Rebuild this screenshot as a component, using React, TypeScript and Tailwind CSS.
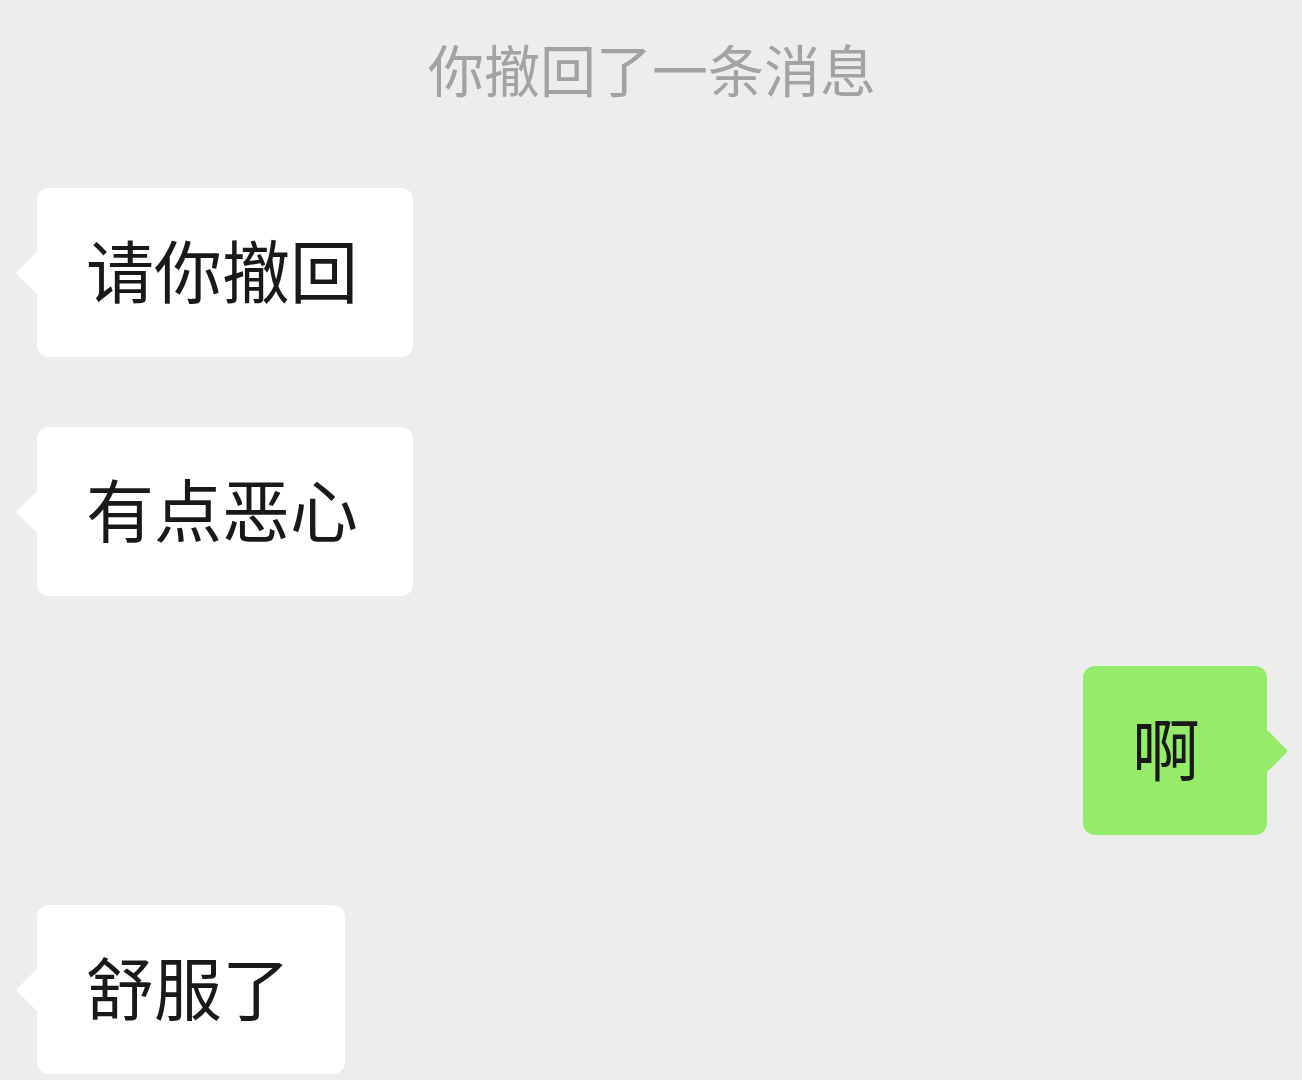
const font = { fontFamily: '"Noto Sans CJK SC", "Noto Sans", sans-serif' };

function Bubble({ text, mine }: { text: string; mine?: boolean }) {
  return (
    <div className={`flex ${mine ? "justify-end" : "justify-start"}`}>
      <div
        className={`relative rounded-[12px] pb-[54px] pl-[49px] pr-[55px] pt-[46px] text-[68px] leading-[69px] text-[#191919] ${
          mine ? "min-w-[184px] bg-[#95ec69]" : "bg-white"
        }`}
      >
        <span
          className={`absolute top-1/2 h-[30px] w-[30px] -translate-y-1/2 rotate-45 rounded-[3px] ${
            mine ? "-right-[15px] bg-[#95ec69]" : "-left-[15px] bg-white"
          }`}
        />
        <span className="relative">{text}</span>
      </div>
    </div>
  );
}

export default function App() {
  return (
    <div className="min-h-[1080px] w-full bg-[#ededed]" style={font}>
      <div className="flex flex-col pl-[37px] pr-[35px] pt-[40px]">
        <div className="text-center text-[56px] leading-[56px] text-[#a3a3a3]">
          你撤回了一条消息
        </div>
        <div className="mt-[92px] flex flex-col gap-[70px]">
          <Bubble text="请你撤回" />
          <Bubble text="有点恶心" />
          <Bubble text="啊" mine />
          <Bubble text="舒服了" />
        </div>
      </div>
    </div>
  );
}
